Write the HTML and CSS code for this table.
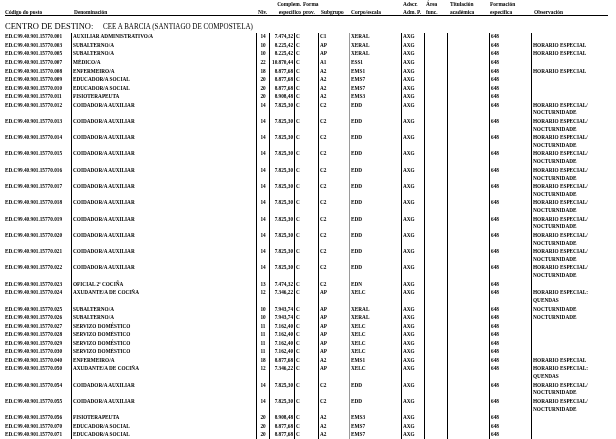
FILE: index.html
```html
<!DOCTYPE html>
<html lang="gl">
<head>
<meta charset="utf-8">
<title>Centro de destino</title>
<link rel="stylesheet" href="styles.css">
</head>
<body>
<div class="page">
  <div class="head">
    <div class="h h-cod">Código do posto</div>
    <div class="h h-den">Denominación</div>
    <div class="h h-niv">Niv.</div>
    <div class="h h-comp">Complem.<br>específico</div>
    <div class="h h-for">Forma<br>prov.</div>
    <div class="h h-sub">Subgrupo</div>
    <div class="h h-cor">Corpo/escala</div>
    <div class="h h-ads">Adscr.<br>Adm. P.</div>
    <div class="h h-are">Área<br>func.</div>
    <div class="h h-tit">Titulación<br>académica</div>
    <div class="h h-fe">Formación<br>específica</div>
    <div class="h h-obs">Observación</div>
  </div>
  <div class="centro"><span>CENTRO DE DESTINO:</span><span class="centro-name">CEE A BARCIA (SANTIAGO DE COMPOSTELA)</span></div>
  <div class="rows" id="rows">
    <div class="row"><div class="c cod">ED.C99.40.901.15770.001</div><div class="c den">AUXILIAR ADMINISTRATIVO/A</div><div class="c niv">14</div><div class="c comp">7.474,32</div><div class="c for">C</div><div class="c sub">C1</div><div class="c cor">XERAL</div><div class="c ads">AXG</div><div class="c are"></div><div class="c tit"></div><div class="c fe">648</div><div class="c obs"></div></div>
    <div class="row"><div class="c cod">ED.C99.40.901.15770.003</div><div class="c den">SUBALTERNO/A</div><div class="c niv">10</div><div class="c comp">8.225,42</div><div class="c for">C</div><div class="c sub">AP</div><div class="c cor">XERAL</div><div class="c ads">AXG</div><div class="c are"></div><div class="c tit"></div><div class="c fe">648</div><div class="c obs">HORARIO ESPECIAL</div></div>
    <div class="row"><div class="c cod">ED.C99.40.901.15770.005</div><div class="c den">SUBALTERNO/A</div><div class="c niv">10</div><div class="c comp">8.225,42</div><div class="c for">C</div><div class="c sub">AP</div><div class="c cor">XERAL</div><div class="c ads">AXG</div><div class="c are"></div><div class="c tit"></div><div class="c fe">648</div><div class="c obs">HORARIO ESPECIAL</div></div>
    <div class="row"><div class="c cod">ED.C99.40.901.15770.007</div><div class="c den">MÉDICO/A</div><div class="c niv">22</div><div class="c comp">10.870,44</div><div class="c for">C</div><div class="c sub">A1</div><div class="c cor">ESS1</div><div class="c ads">AXG</div><div class="c are"></div><div class="c tit"></div><div class="c fe">648</div><div class="c obs"></div></div>
    <div class="row"><div class="c cod">ED.C99.40.901.15770.008</div><div class="c den">ENFERMEIRO/A</div><div class="c niv">18</div><div class="c comp">8.877,68</div><div class="c for">C</div><div class="c sub">A2</div><div class="c cor">EMS1</div><div class="c ads">AXG</div><div class="c are"></div><div class="c tit"></div><div class="c fe">648</div><div class="c obs">HORARIO ESPECIAL</div></div>
    <div class="row"><div class="c cod">ED.C99.40.901.15770.009</div><div class="c den">EDUCADOR/A SOCIAL</div><div class="c niv">20</div><div class="c comp">8.877,68</div><div class="c for">C</div><div class="c sub">A2</div><div class="c cor">EMS7</div><div class="c ads">AXG</div><div class="c are"></div><div class="c tit"></div><div class="c fe">648</div><div class="c obs"></div></div>
    <div class="row"><div class="c cod">ED.C99.40.901.15770.010</div><div class="c den">EDUCADOR/A SOCIAL</div><div class="c niv">20</div><div class="c comp">8.877,68</div><div class="c for">C</div><div class="c sub">A2</div><div class="c cor">EMS7</div><div class="c ads">AXG</div><div class="c are"></div><div class="c tit"></div><div class="c fe">648</div><div class="c obs"></div></div>
    <div class="row"><div class="c cod">ED.C99.40.901.15770.011</div><div class="c den">FISIOTERAPEUTA</div><div class="c niv">20</div><div class="c comp">8.908,48</div><div class="c for">C</div><div class="c sub">A2</div><div class="c cor">EMS3</div><div class="c ads">AXG</div><div class="c are"></div><div class="c tit"></div><div class="c fe">648</div><div class="c obs"></div></div>
    <div class="row"><div class="c cod">ED.C99.40.901.15770.012</div><div class="c den">COIDADOR/A AUXILIAR</div><div class="c niv">14</div><div class="c comp">7.825,30</div><div class="c for">C</div><div class="c sub">C2</div><div class="c cor">EDD</div><div class="c ads">AXG</div><div class="c are"></div><div class="c tit"></div><div class="c fe">648</div><div class="c obs">HORARIO ESPECIAL/<br>NOCTURNIDADE</div></div>
    <div class="row"><div class="c cod">ED.C99.40.901.15770.013</div><div class="c den">COIDADOR/A AUXILIAR</div><div class="c niv">14</div><div class="c comp">7.825,30</div><div class="c for">C</div><div class="c sub">C2</div><div class="c cor">EDD</div><div class="c ads">AXG</div><div class="c are"></div><div class="c tit"></div><div class="c fe">648</div><div class="c obs">HORARIO ESPECIAL/<br>NOCTURNIDADE</div></div>
    <div class="row"><div class="c cod">ED.C99.40.901.15770.014</div><div class="c den">COIDADOR/A AUXILIAR</div><div class="c niv">14</div><div class="c comp">7.825,30</div><div class="c for">C</div><div class="c sub">C2</div><div class="c cor">EDD</div><div class="c ads">AXG</div><div class="c are"></div><div class="c tit"></div><div class="c fe">648</div><div class="c obs">HORARIO ESPECIAL/<br>NOCTURNIDADE</div></div>
    <div class="row"><div class="c cod">ED.C99.40.901.15770.015</div><div class="c den">COIDADOR/A AUXILIAR</div><div class="c niv">14</div><div class="c comp">7.825,30</div><div class="c for">C</div><div class="c sub">C2</div><div class="c cor">EDD</div><div class="c ads">AXG</div><div class="c are"></div><div class="c tit"></div><div class="c fe">648</div><div class="c obs">HORARIO ESPECIAL/<br>NOCTURNIDADE</div></div>
    <div class="row"><div class="c cod">ED.C99.40.901.15770.016</div><div class="c den">COIDADOR/A AUXILIAR</div><div class="c niv">14</div><div class="c comp">7.825,30</div><div class="c for">C</div><div class="c sub">C2</div><div class="c cor">EDD</div><div class="c ads">AXG</div><div class="c are"></div><div class="c tit"></div><div class="c fe">648</div><div class="c obs">HORARIO ESPECIAL/<br>NOCTURNIDADE</div></div>
    <div class="row"><div class="c cod">ED.C99.40.901.15770.017</div><div class="c den">COIDADOR/A AUXILIAR</div><div class="c niv">14</div><div class="c comp">7.825,30</div><div class="c for">C</div><div class="c sub">C2</div><div class="c cor">EDD</div><div class="c ads">AXG</div><div class="c are"></div><div class="c tit"></div><div class="c fe">648</div><div class="c obs">HORARIO ESPECIAL/<br>NOCTURNIDADE</div></div>
    <div class="row"><div class="c cod">ED.C99.40.901.15770.018</div><div class="c den">COIDADOR/A AUXILIAR</div><div class="c niv">14</div><div class="c comp">7.825,30</div><div class="c for">C</div><div class="c sub">C2</div><div class="c cor">EDD</div><div class="c ads">AXG</div><div class="c are"></div><div class="c tit"></div><div class="c fe">648</div><div class="c obs">HORARIO ESPECIAL/<br>NOCTURNIDADE</div></div>
    <div class="row"><div class="c cod">ED.C99.40.901.15770.019</div><div class="c den">COIDADOR/A AUXILIAR</div><div class="c niv">14</div><div class="c comp">7.825,30</div><div class="c for">C</div><div class="c sub">C2</div><div class="c cor">EDD</div><div class="c ads">AXG</div><div class="c are"></div><div class="c tit"></div><div class="c fe">648</div><div class="c obs">HORARIO ESPECIAL/<br>NOCTURNIDADE</div></div>
    <div class="row"><div class="c cod">ED.C99.40.901.15770.020</div><div class="c den">COIDADOR/A AUXILIAR</div><div class="c niv">14</div><div class="c comp">7.825,30</div><div class="c for">C</div><div class="c sub">C2</div><div class="c cor">EDD</div><div class="c ads">AXG</div><div class="c are"></div><div class="c tit"></div><div class="c fe">648</div><div class="c obs">HORARIO ESPECIAL/<br>NOCTURNIDADE</div></div>
    <div class="row"><div class="c cod">ED.C99.40.901.15770.021</div><div class="c den">COIDADOR/A AUXILIAR</div><div class="c niv">14</div><div class="c comp">7.825,30</div><div class="c for">C</div><div class="c sub">C2</div><div class="c cor">EDD</div><div class="c ads">AXG</div><div class="c are"></div><div class="c tit"></div><div class="c fe">648</div><div class="c obs">HORARIO ESPECIAL/<br>NOCTURNIDADE</div></div>
    <div class="row"><div class="c cod">ED.C99.40.901.15770.022</div><div class="c den">COIDADOR/A AUXILIAR</div><div class="c niv">14</div><div class="c comp">7.825,30</div><div class="c for">C</div><div class="c sub">C2</div><div class="c cor">EDD</div><div class="c ads">AXG</div><div class="c are"></div><div class="c tit"></div><div class="c fe">648</div><div class="c obs">HORARIO ESPECIAL/<br>NOCTURNIDADE</div></div>
    <div class="row"><div class="c cod">ED.C99.40.901.15770.023</div><div class="c den">OFICIAL 2ª COCIÑA</div><div class="c niv">13</div><div class="c comp">7.474,32</div><div class="c for">C</div><div class="c sub">C2</div><div class="c cor">EDN</div><div class="c ads">AXG</div><div class="c are"></div><div class="c tit"></div><div class="c fe">648</div><div class="c obs"></div></div>
    <div class="row"><div class="c cod">ED.C99.40.901.15770.024</div><div class="c den">AXUDANTE/A DE COCIÑA</div><div class="c niv">12</div><div class="c comp">7.346,22</div><div class="c for">C</div><div class="c sub">AP</div><div class="c cor">XELC</div><div class="c ads">AXG</div><div class="c are"></div><div class="c tit"></div><div class="c fe">648</div><div class="c obs">HORARIO ESPECIAL:<br>QUENDAS</div></div>
    <div class="row"><div class="c cod">ED.C99.40.901.15770.025</div><div class="c den">SUBALTERNO/A</div><div class="c niv">10</div><div class="c comp">7.943,74</div><div class="c for">C</div><div class="c sub">AP</div><div class="c cor">XERAL</div><div class="c ads">AXG</div><div class="c are"></div><div class="c tit"></div><div class="c fe">648</div><div class="c obs">NOCTURNIDADE</div></div>
    <div class="row"><div class="c cod">ED.C99.40.901.15770.026</div><div class="c den">SUBALTERNO/A</div><div class="c niv">10</div><div class="c comp">7.943,74</div><div class="c for">C</div><div class="c sub">AP</div><div class="c cor">XERAL</div><div class="c ads">AXG</div><div class="c are"></div><div class="c tit"></div><div class="c fe">648</div><div class="c obs">NOCTURNIDADE</div></div>
    <div class="row"><div class="c cod">ED.C99.40.901.15770.027</div><div class="c den">SERVIZO DOMÉSTICO</div><div class="c niv">11</div><div class="c comp">7.162,40</div><div class="c for">C</div><div class="c sub">AP</div><div class="c cor">XELC</div><div class="c ads">AXG</div><div class="c are"></div><div class="c tit"></div><div class="c fe">648</div><div class="c obs"></div></div>
    <div class="row"><div class="c cod">ED.C99.40.901.15770.028</div><div class="c den">SERVIZO DOMÉSTICO</div><div class="c niv">11</div><div class="c comp">7.162,40</div><div class="c for">C</div><div class="c sub">AP</div><div class="c cor">XELC</div><div class="c ads">AXG</div><div class="c are"></div><div class="c tit"></div><div class="c fe">648</div><div class="c obs"></div></div>
    <div class="row"><div class="c cod">ED.C99.40.901.15770.029</div><div class="c den">SERVIZO DOMÉSTICO</div><div class="c niv">11</div><div class="c comp">7.162,40</div><div class="c for">C</div><div class="c sub">AP</div><div class="c cor">XELC</div><div class="c ads">AXG</div><div class="c are"></div><div class="c tit"></div><div class="c fe">648</div><div class="c obs"></div></div>
    <div class="row"><div class="c cod">ED.C99.40.901.15770.030</div><div class="c den">SERVIZO DOMÉSTICO</div><div class="c niv">11</div><div class="c comp">7.162,40</div><div class="c for">C</div><div class="c sub">AP</div><div class="c cor">XELC</div><div class="c ads">AXG</div><div class="c are"></div><div class="c tit"></div><div class="c fe">648</div><div class="c obs"></div></div>
    <div class="row"><div class="c cod">ED.C99.40.901.15770.040</div><div class="c den">ENFERMEIRO/A</div><div class="c niv">18</div><div class="c comp">8.877,68</div><div class="c for">C</div><div class="c sub">A2</div><div class="c cor">EMS1</div><div class="c ads">AXG</div><div class="c are"></div><div class="c tit"></div><div class="c fe">648</div><div class="c obs">HORARIO ESPECIAL</div></div>
    <div class="row"><div class="c cod">ED.C99.40.901.15770.050</div><div class="c den">AXUDANTE/A DE COCIÑA</div><div class="c niv">12</div><div class="c comp">7.346,22</div><div class="c for">C</div><div class="c sub">AP</div><div class="c cor">XELC</div><div class="c ads">AXG</div><div class="c are"></div><div class="c tit"></div><div class="c fe">648</div><div class="c obs">HORARIO ESPECIAL:<br>QUENDAS</div></div>
    <div class="row"><div class="c cod">ED.C99.40.901.15770.054</div><div class="c den">COIDADOR/A AUXILIAR</div><div class="c niv">14</div><div class="c comp">7.825,30</div><div class="c for">C</div><div class="c sub">C2</div><div class="c cor">EDD</div><div class="c ads">AXG</div><div class="c are"></div><div class="c tit"></div><div class="c fe">648</div><div class="c obs">HORARIO ESPECIAL/<br>NOCTURNIDADE</div></div>
    <div class="row"><div class="c cod">ED.C99.40.901.15770.055</div><div class="c den">COIDADOR/A AUXILIAR</div><div class="c niv">14</div><div class="c comp">7.825,30</div><div class="c for">C</div><div class="c sub">C2</div><div class="c cor">EDD</div><div class="c ads">AXG</div><div class="c are"></div><div class="c tit"></div><div class="c fe">648</div><div class="c obs">HORARIO ESPECIAL/<br>NOCTURNIDADE</div></div>
    <div class="row"><div class="c cod">ED.C99.40.901.15770.056</div><div class="c den">FISIOTERAPEUTA</div><div class="c niv">20</div><div class="c comp">8.908,48</div><div class="c for">C</div><div class="c sub">A2</div><div class="c cor">EMS3</div><div class="c ads">AXG</div><div class="c are"></div><div class="c tit"></div><div class="c fe">648</div><div class="c obs"></div></div>
    <div class="row"><div class="c cod">ED.C99.40.901.15770.070</div><div class="c den">EDUCADOR/A SOCIAL</div><div class="c niv">20</div><div class="c comp">8.877,68</div><div class="c for">C</div><div class="c sub">A2</div><div class="c cor">EMS7</div><div class="c ads">AXG</div><div class="c are"></div><div class="c tit"></div><div class="c fe">648</div><div class="c obs"></div></div>
    <div class="row"><div class="c cod">ED.C99.40.901.15770.071</div><div class="c den">EDUCADOR/A SOCIAL</div><div class="c niv">20</div><div class="c comp">8.877,68</div><div class="c for">C</div><div class="c sub">A2</div><div class="c cor">EMS7</div><div class="c ads">AXG</div><div class="c are"></div><div class="c tit"></div><div class="c fe">648</div><div class="c obs"></div></div>
  </div>
</div>
</body>
</html>
```
FILE: styles.css
```css
html, body {
  margin: 0;
  padding: 0;
  background: #ffffff;
}
body {
  font-family: "Liberation Serif", "Times New Roman", serif;
  color: #000;
  width: 616px;
  height: 439px;
  overflow: hidden;
}
.page {
  display: flex;
  flex-direction: column;
  will-change: transform;
}

/* header */
.head {
  display: grid;
  grid-template-columns: 67px 184px 14px 32px 18px 30px 51px 24px 23px 41px 44px 1fr;
  align-items: end;
  margin: 0 8px 0 5px;
  border-bottom: 1px solid #000;
  font-weight: bold;
  font-size: 5.4px;
  line-height: 8px;
  height: 16px;
  box-sizing: border-box;
}
.h { white-space: nowrap; }
.h-cod { padding-left: 0; }
.h-den { padding-left: 2px; }
.h-niv { padding-left: 2px; }
.h-comp { text-align: right; padding-right: 1px; }
.h-for { padding-left: 1px; }
.h-sub { padding-left: 1px; }
.h-cor { padding-left: 1px; }
.h-ads { padding-left: 2px; }
.h-are { padding-left: 1px; }
.h-tit { padding-left: 2px; }
.h-fe { padding-left: 1px; }
.h-obs { padding-left: 1px; }

/* centro */
.centro {
  display: flex;
  align-items: baseline;
  gap: 10px;
  padding: 5px 0 0 5px;
  height: 17px;
  box-sizing: border-box;
  font-size: 8.5px;
  line-height: 10px;
  white-space: nowrap;
}
.centro-name {
  display: inline-block;
  transform: scaleX(0.83);
  transform-origin: 0 50%;
}

/* rows */
.rows {
  display: flex;
  flex-direction: column;
}
.row {
  display: grid;
  grid-template-columns: 71px 185px 13px 25px 24px 31px 52px 23px 23px 42px 42px 1fr;
  font-size: 5.25px;
  font-weight: bold;
  line-height: 7.75px;
}
.c {
  padding: 0.4px 0 0.4px 2px;
  border-left: 1px solid #000;
  white-space: nowrap;
  overflow: hidden;
}
.cod {
  border-left: none;
  padding-left: 5px;
}
.den { padding-left: 1px; }
.niv { text-align: center; padding-left: 0; }
.comp { text-align: right; padding-left: 0; padding-right: 1px; }
.for { padding-left: 1px; }
.sub { padding-left: 1px; }
.cor { border-left-color: #9a9a9a; padding-left: 1px; }
.ads { padding-left: 1px; }
.fe { padding-left: 1px; }
.obs { padding-left: 1px; }
```
